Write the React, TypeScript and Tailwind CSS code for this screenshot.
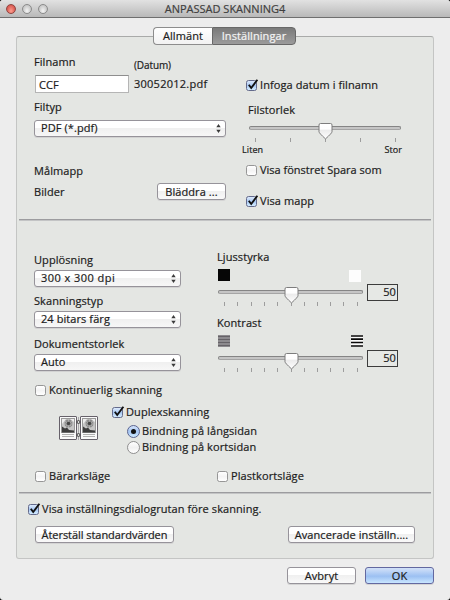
import { useState, type ReactNode } from "react";
import clsx from "clsx";

/* Scan settings dialog, "Inställningar" tab. */

function Text({ children, className }: { children: ReactNode; className?: string }) {
  return <span className={clsx("block h-4 whitespace-nowrap leading-4", className)}>{children}</span>;
}

function Check({ label, on = false, className }: { label: string; on?: boolean; className?: string }) {
  const [checked, setChecked] = useState(on);
  return (
    <button
      type="button"
      role="checkbox"
      aria-checked={checked}
      onClick={() => setChecked(!checked)}
      className={clsx("flex h-4 items-center gap-[3px]", className)}
    >
      <span
        className={clsx(
          "relative block size-[11px] shrink-0 rounded-[2.5px] border",
          checked
            ? "border-[#646b8c] bg-linear-to-b from-[#dce9fb] via-[#a9c9f4] to-[#d3ecff]"
            : "border-[#969696] bg-linear-to-b from-white via-[#f4f4f4] to-white",
        )}
      >
        {checked && (
          <svg viewBox="0 0 13 13" className="absolute -top-[2px] -left-[1px] size-[13px]" fill="none">
            <path d="M2.8 5.8 5.2 9 11.4 .8" stroke="#111" strokeWidth="1.9" />
          </svg>
        )}
      </span>
      <Text>{label}</Text>
    </button>
  );
}

function Radio({ label, checked, onSelect }: { label: string; checked: boolean; onSelect: () => void }) {
  return (
    <button type="button" role="radio" aria-checked={checked} onClick={onSelect} className="flex h-4 items-center gap-[2px]">
      <span
        className={clsx(
          "flex size-[13px] items-center justify-center rounded-full border",
          checked
            ? "border-[#5a6490] bg-linear-to-b from-[#d5e3f9] via-[#a4c5f3] to-[#cdeaff]"
            : "border-[#8f8f8f] bg-linear-to-b from-white via-[#f1f1f1] to-white",
        )}
      >
        {checked && <span className="size-[5px] rounded-full bg-[#111]" />}
      </span>
      <Text>{label}</Text>
    </button>
  );
}

function Select({ value, className }: { value: string; className: string }) {
  return (
    <button
      type="button"
      className={clsx(
        "flex h-[17px] items-center justify-between rounded-[3px] border border-[#96939a] bg-linear-to-b from-white from-45% via-[#f0f0f0] via-50% to-[#f7f7f7] pr-[4px] pb-px pl-[6px] shadow-[0_1px_0_#d2d2d2]",
        className,
      )}
    >
      <Text>{value}</Text>
      <svg viewBox="0 0 5 9" className="h-[9px] w-[5px]" fill="#3c3c3c">
        <path d="M2.5 0 4.7 3.3H.3zM2.5 9 4.7 5.7H.3z" />
      </svg>
    </button>
  );
}

function PushButton({ label, primary, className }: { label: string; primary?: boolean; className: string }) {
  return (
    <button
      type="button"
      className={clsx(
        "flex items-center justify-center rounded-[3px] border bg-linear-to-b shadow-[0_1px_0_#d4d4d4]",
        primary
          ? "border-[#6368a0] from-[#cfdff8] from-5% via-[#9cc0f2] via-55% to-[#c9e6ff]"
          : "border-[#96939a] from-white from-45% via-[#f0f0f0] via-50% to-[#f9f9f9]",
        className,
      )}
    >
      <Text>{label}</Text>
    </button>
  );
}

const FILE_SIZE_TICKS = [6, 41, 76, 111, 146];
const LEVEL_TICKS = [6, 19, 33, 46, 59, 73, 86, 99, 112, 125, 139];

function Slider({ ticks, thumb, className }: { ticks: number[]; thumb: number; className: string }) {
  return (
    <div className={clsx("relative h-[19px]", className)}>
      <div className="h-[7px] pt-[3px]">
        <div className="h-[4px] rounded-full border border-[#858585] border-b-[#a5a5a5] bg-[#c5c5c5]" />
      </div>
      {ticks.map((x) => (
        <span key={x} className="absolute top-[15px] h-[4px] w-px bg-[#9d9d9d]" style={{ left: x }} />
      ))}
      <svg viewBox="0 0 15 17" className="absolute top-0 h-[17px] w-[15px]" style={{ left: thumb }}>
        <defs>
          <linearGradient id="thumb" x2="0" y2="1">
            <stop offset="0" stopColor="#fff" />
            <stop offset=".35" stopColor="#fefefe" />
            <stop offset=".45" stopColor="#ececec" />
            <stop offset="1" stopColor="#fff" />
          </linearGradient>
        </defs>
        <path d="M2.5.5h10Q14 .5 14 2v6.8Q14 10 7.5 15.9 1 10 1 8.8V2Q1 .5 2.5.5z" fill="url(#thumb)" stroke="#7d7d7d" />
      </svg>
    </div>
  );
}

function Level({ label, low, high }: { label: string; low: ReactNode; high: ReactNode }) {
  return (
    <div className="w-[181px]">
      <Text>{label}</Text>
      <div className="mt-[3px] ml-px flex h-[13px] w-[145px] justify-between">{low}{high}</div>
      <div className="flex">
        <Slider ticks={LEVEL_TICKS} thumb={66} className="mt-[6px] ml-px w-[145px]" />
        <div className="mt-[3px] ml-[4px] flex h-[17px] w-[31px] items-center justify-end border border-[#3c3c3c] bg-[#e6e8e5] pr-px pb-px">
          <Text>50</Text>
        </div>
      </div>
    </div>
  );
}

function Page({ x }: { x: number }) {
  return (
    <g transform={`translate(${x} 0)`}>
      <rect x=".5" y=".5" width="17" height="23" rx=".5" fill="#fafafa" stroke="#66616a" />
      <rect x="2.5" y="2.5" width="13" height="14" fill="#c6c6c6" stroke="#999" />
      <path d="M3 3h4L3 8zM15 3v3l-4-3z" fill="#eee" />
      <circle cx="9.5" cy="7.5" r="4" fill="#8c8c8c" />
      <path d="m6 5 7 6m0-6-7 6m3.5-8v10M5 8h9" stroke="#c4c4c4" strokeWidth=".6" />
      <circle cx="9.5" cy="7.5" r="1.8" fill="#444" />
      <path d="M3 10.5 6 12.5l2-1 2 2.5 5 .5v2H3z" fill="#3c3c3c" />
      <path d="M3 18.5h12M3 20.5h12" stroke="#b0b0b0" />
    </g>
  );
}

function DuplexIcon() {
  return (
    <svg viewBox="0 0 39 25" className="h-[25px] w-[39px]">
      <Page x={0} />
      <Page x={21} />
      <path d="M19.5 1v23" stroke="#aaa8ac" />
      <g fill="#ddd" stroke="#444">
        <circle cx="19.5" cy="6" r="1.5" />
        <circle cx="19.5" cy="19" r="1.5" />
      </g>
    </svg>
  );
}

function TitleBar() {
  return (
    <header className="flex h-[18px] shrink-0 items-center border-b border-[#6f6f6f] bg-linear-to-b from-[#e2e2e2] to-[#b9b9b9]">
      <div className="flex w-[50px] gap-[6px] pl-[6px]">
        <span className="size-[10px] rounded-full border border-[#8f4540] bg-radial-[at_50%_75%] from-[#ff9d8e] to-[#c93f39]" />
        <span className="size-[10px] rounded-full border border-[#8b8b8b] bg-radial-[at_50%_75%] from-[#f5f5f5] to-[#b4b4b4]" />
        <span className="size-[10px] rounded-full border border-[#8b8b8b] bg-radial-[at_50%_75%] from-[#f5f5f5] to-[#b4b4b4]" />
      </div>
      <h1 className="flex-1 pt-[2px] pr-[50px] text-center text-[11px] tracking-normal whitespace-nowrap text-[#3f3f3f]">
        ANPASSAD SKANNING4
      </h1>
    </header>
  );
}

function Divider() {
  return <hr className="mx-[2px] h-[2px] shrink-0 border-t border-[#9c9c9f] bg-[#c3c4c5]" />;
}

export default function App() {
  const [binding, setBinding] = useState("long");

  return (
    <div className="h-[600px] w-[450px] bg-black">
      <div className="flex h-full flex-col overflow-hidden rounded-[3px] bg-[#ededed] font-['Open_Sans','Noto_Sans',sans-serif] text-[11px] tracking-[0.08px] text-[#1c1c1c] [-webkit-text-stroke:0.2px]">
        <TitleBar />

        {/* Tabs straddle the top edge of the panel */}
        <nav className="relative z-10 mt-[9px] ml-[153px] flex h-[18px] w-[143px] shrink-0">
          <button type="button" className="w-[59px] rounded-l-[4px] border border-r-0 border-[#8d8d8d] bg-linear-to-b from-white to-[#f2f2f2]">
            <Text>Allmänt</Text>
          </button>
          <button type="button" className="flex-1 rounded-r-[4px] border border-[#686868] bg-linear-to-b from-[#7a7a7a] to-[#9b9b9b] text-[#f4f4f4]">
            <Text>Inställningar</Text>
          </button>
        </nav>

        <main className="-mt-[9px] ml-[16px] flex h-[523px] w-[418px] shrink-0 flex-col rounded-[3px] border border-[#c4c5c4] border-t-[#a9aaa9] bg-[#e4e6e3]">
          <section className="flex h-[182px] shrink-0">
            <div className="w-[212px] pt-[17px] pl-[17px]">
              <div className="flex">
                <Text className="w-[100px]">Filnamn</Text>
                <Text className="mt-[3px] text-[10px] tracking-[-0.1px]">(Datum)</Text>
              </div>
              <div className="mt-[2px] flex h-[18px] items-center">
                <input
                  defaultValue="CCF"
                  className="ml-px h-[18px] w-[94px] border border-[#b5b5b5] border-t-[#8e8e8e] bg-white px-[3px] outline-none"
                />
                <Text className="ml-[5px] tracking-[0.25px]">30052012.pdf</Text>
              </div>
              <Text className="mt-[6px]">Filtyp</Text>
              <Select value="PDF (*.pdf)" className="mt-[5px] w-[192px]" />
              <Text className="mt-[26px]">Målmapp</Text>
              <div className="mt-[4px] flex w-[192px] items-center justify-between">
                <Text>Bilder</Text>
                <PushButton label="Bläddra ..." className="h-[17px] w-[69px]" />
              </div>
            </div>

            <div className="pt-[40px] pl-[17px]">
              <Check label="Infoga datum i filnamn" on />
              <Text className="mt-[9px] ml-[2px]">Filstorlek</Text>
              <Slider ticks={FILE_SIZE_TICKS} thumb={69} className="mt-[5px] ml-[3px] w-[152px]" />
              <div className="-ml-[4px] flex w-[160px] justify-between text-[9px]">
                <Text>Liten</Text>
                <Text>Stor</Text>
              </div>
              <Check label="Visa fönstret Spara som" className="mt-[4px] tracking-normal" />
              <Check label="Visa mapp" on className="mt-[15px]" />
            </div>
          </section>
          <Divider />

          <section className="flex h-[161px] shrink-0">
            <div className="w-[200px] pt-[31px] pl-[17px]">
              <Text>Upplösning</Text>
              <Select value="300 x 300 dpi" className="mt-[2px] w-[147px] tracking-[0.45px]" />
              <Text className="mt-[6px]">Skanningstyp</Text>
              <Select value="24 bitars färg" className="mt-[2px] w-[147px]" />
              <Text className="mt-[8px]">Dokumentstorlek</Text>
              <Select value="Auto" className="mt-[2px] w-[147px]" />
            </div>
            <div className="flex flex-col gap-[9px] pt-[28px]">
              <Level
                label="Ljusstyrka"
                low={<span className="mt-px size-[12px] bg-[#060606]" />}
                high={<span className="mt-[2px] mr-[2px] size-[12px] bg-[#fdfdfd]" />}
              />
              <Level
                label="Kontrast"
                low={
                  <svg viewBox="0 0 12 12" className="mt-px size-[12px]">
                    <path d="M0 0h12v12H0z" fill="#9b989c" />
                    <path d="M0 1.5h12M0 4.5h12M0 7.5h12M0 10.5h12" stroke="#666368" strokeWidth="1.3" />
                  </svg>
                }
                high={
                  <svg viewBox="0 0 12 12" className="mt-px size-[12px]">
                    <path d="M0 0h12v12H0z" fill="#fafafa" />
                    <path d="M0 1h12M0 4.2h12M0 7.5h12M0 11h12" stroke="#080808" strokeWidth="1.7" />
                  </svg>
                }
              />
            </div>
          </section>

          <section className="h-[110px] shrink-0 pl-[18px]">
            <Check label="Kontinuerlig skanning" />
            <div className="flex h-[57px] pt-[6px] pl-[24px]">
              <div className="mt-[12px]"><DuplexIcon /></div>
              <div className="ml-[14px]">
                <Check label="Duplexskanning" on />
                <div role="radiogroup" className="mt-[3px] ml-[15px]">
                  <Radio label="Bindning på långsidan" checked={binding === "long"} onSelect={() => setBinding("long")} />
                  <Radio label="Bindning på kortsidan" checked={binding === "short"} onSelect={() => setBinding("short")} />
                </div>
              </div>
            </div>
            <div className="mt-[13px] flex">
              <Check label="Bärarksläge" className="w-[182px]" />
              <Check label="Plastkortsläge" />
            </div>
          </section>
          <Divider />

          <section className="pt-[7px] pl-[11px]">
            <Check label="Visa inställningsdialogrutan före skanning." on />
            <div className="mt-[9px] flex w-[387px] justify-between pl-[7px]">
              <PushButton label="Återställ standardvärden" className="h-[17px] w-[139px] tracking-[-0.05px]" />
              <PushButton label="Avancerade inställn...." className="h-[17px] w-[127px]" />
            </div>
          </section>
        </main>

        <footer className="mt-[8px] ml-[287px] flex w-[147px] justify-between">
          <PushButton label="Avbryt" className="h-[17px] w-[69px]" />
          <PushButton label="OK" primary className="h-[17px] w-[69px]" />
        </footer>
      </div>
    </div>
  );
}
